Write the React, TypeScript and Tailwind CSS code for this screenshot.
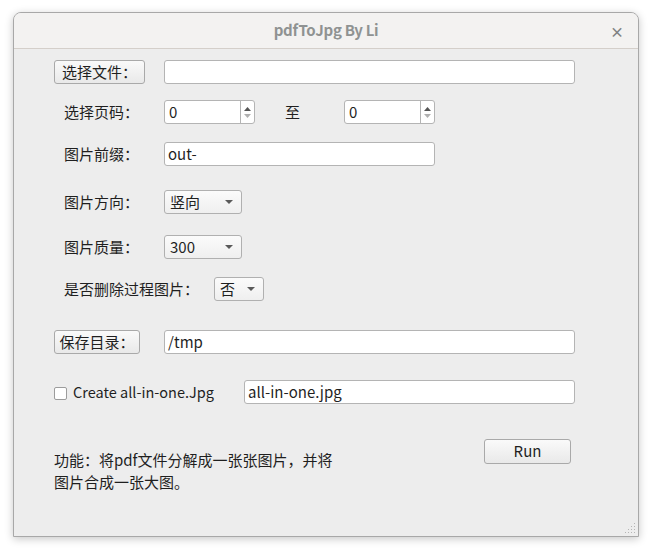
import React from "react";

const font = "font-['Noto_Sans_CJK_SC','Noto_Sans',sans-serif]";

function Field({ value = "", className = "" }: { value?: string; className?: string }) {
  return (
    <div
      className={`h-[24px] bg-white border border-[#b4b4b4] rounded-[3px] flex items-center pl-[3px] text-[15px] text-[#1f1f1f] ${className}`}
    >
      {value}
    </div>
  );
}

function PushButton({ label, className = "" }: { label: string; className?: string }) {
  return (
    <div
      className={`h-[24px] flex items-center justify-center rounded-[3px] border border-[#a9a9a9] bg-gradient-to-b from-[#fafafa] to-[#e9e9e9] text-[15px] text-[#1f1f1f] ${className}`}
    >
      {label}
    </div>
  );
}

function SpinBox({ value }: { value: string }) {
  return (
    <div className="w-[91px] h-[24px] bg-white border border-[#b4b4b4] rounded-[3px] flex">
      <div className="flex-1 flex items-center pl-[4px] text-[15px] text-[#1f1f1f]">{value}</div>
      <div className="w-[14px] border-l border-[#b4b4b4] flex flex-col items-center justify-center gap-[3px]">
        <svg width="7" height="4" viewBox="0 0 7 4">
          <path d="M0 4 L3.5 0 L7 4 Z" fill="#555" />
        </svg>
        <svg width="7" height="4" viewBox="0 0 7 4">
          <path d="M0 0 L7 0 L3.5 4 Z" fill="#b0b0b0" />
        </svg>
      </div>
    </div>
  );
}

function Combo({ value, className = "" }: { value: string; className?: string }) {
  return (
    <div
      className={`h-[24px] flex items-center justify-between pl-[5px] pr-[8px] rounded-[3px] border border-[#b0b0b0] bg-gradient-to-b from-[#fbfbfb] to-[#efefef] text-[15px] text-[#1f1f1f] ${className}`}
    >
      <span>{value}</span>
      <svg width="8" height="4" viewBox="0 0 8 4">
        <path d="M0 0 L8 0 L4 4 Z" fill="#5a5a5a" />
      </svg>
    </div>
  );
}

function Label({ text, className = "w-[110px]" }: { text: string; className?: string }) {
  return <div className={`pl-[10px] text-[15px] text-[#1f1f1f] ${className}`}>{text}</div>;
}

export default function App() {
  return (
    <div className={`min-h-screen bg-white pt-[12px] pl-[13px] ${font}`}>
      <div className="relative w-[626px] h-[525px] rounded-t-[8px] border border-[#a8a8a8] bg-[#ededed] shadow-[0_2px_8px_rgba(0,0,0,0.22)] flex flex-col overflow-hidden">
        {/* title bar */}
        <div className="relative h-[36px] shrink-0 bg-[#f3f2f1] border-b border-[#d4cfca] flex items-center justify-center">
          <span className="text-[15px] font-semibold text-[#8f9292] tracking-[-0.3px]">pdfToJpg By Li</span>
          <span className="absolute right-[14px] top-[8px] text-[14px] font-bold text-[#7f8283]">×</span>
        </div>

        {/* body */}
        <div className="flex flex-col pl-[40px] pr-[63px]">
          <div className="mt-[11px] flex items-center">
            <PushButton label="选择文件：" className="w-[91px]" />
            <Field className="ml-[19px] flex-1" />
          </div>

          <div className="mt-[16px] flex items-center">
            <Label text="选择页码：" />
            <SpinBox value="0" />
            <span className="ml-[30px] w-[59px] text-[15px] text-[#1f1f1f]">至</span>
            <SpinBox value="0" />
          </div>

          <div className="mt-[18px] flex items-center">
            <Label text="图片前缀：" />
            <Field value="out-" className="w-[271px]" />
          </div>

          <div className="mt-[24px] flex items-center">
            <Label text="图片方向：" />
            <Combo value="竖向" className="w-[78px]" />
          </div>

          <div className="mt-[21px] flex items-center">
            <Label text="图片质量：" />
            <Combo value="300" className="w-[78px]" />
          </div>

          <div className="mt-[18px] flex items-center">
            <Label text="是否删除过程图片：" className="w-[160px]" />
            <Combo value="否" className="w-[50px]" />
          </div>

          <div className="mt-[29px] flex items-center">
            <PushButton label="保存目录：" className="w-[86px]" />
            <Field value="/tmp" className="ml-[24px] flex-1" />
          </div>

          <div className="mt-[26px] flex items-center">
            <div className="w-[190px] flex items-center">
              <div className="w-[13px] h-[13px] bg-white border border-[#9c9c9c] rounded-[2px] mt-[2px]" />
              <span className="ml-[6px] text-[14.5px] text-[#1f1f1f]">Create all-in-one.Jpg</span>
            </div>
            <Field value="all-in-one.jpg" className="flex-1" />
          </div>

          <div className="mt-[35px] flex items-start justify-between">
            <p className="mt-[10px] text-[15px] leading-[22px] text-[#1f1f1f]">
              功能：将pdf文件分解成一张张图片，并将
              <br />
              图片合成一张大图。
            </p>
            <PushButton label="Run" className="w-[87px] h-[25px] mr-[4px]" />
          </div>
        </div>

        {/* resize grip */}
        <svg className="absolute right-[2px] bottom-[2px]" width="11" height="11" viewBox="0 0 11 11">
          {[
            [9, 1],
            [6, 4],
            [9, 4],
            [3, 7],
            [6, 7],
            [9, 7],
            [0, 10],
            [3, 10],
            [6, 10],
            [9, 10],
          ].map(([x, y]) => (
            <rect key={`${x}-${y}`} x={x} y={y - 1} width="1" height="1" fill="#b5b5b5" />
          ))}
        </svg>
      </div>
    </div>
  );
}
